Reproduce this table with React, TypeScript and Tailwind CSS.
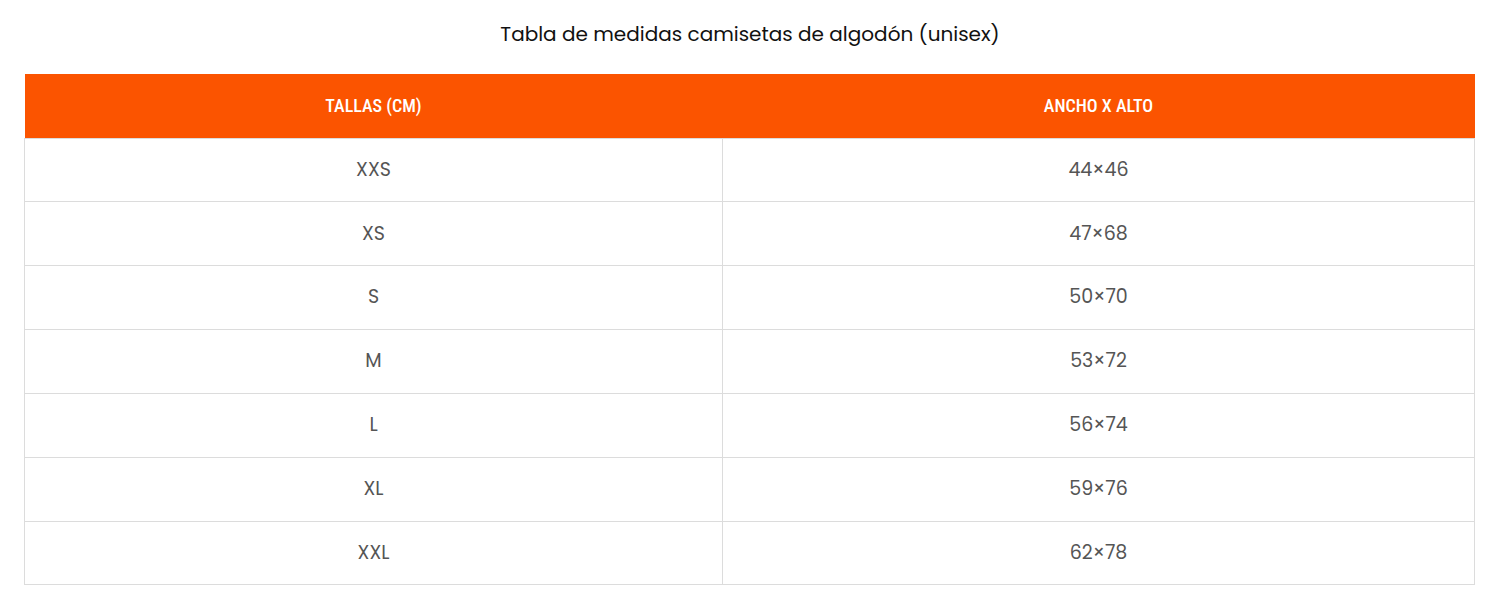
import React from "react";

const rows: [string, string][] = [
  ["XXS", "44×46"],
  ["XS", "47×68"],
  ["S", "50×70"],
  ["M", "53×72"],
  ["L", "56×74"],
  ["XL", "59×76"],
  ["XXL", "62×78"],
];

export default function App() {
  return (
    <div className="w-[1504px] h-[603px] bg-white px-[24px] pt-[19px]">
      <h2 className="text-center text-[20px] leading-[30px] text-[#111] font-['Poppins','Inter','Open_Sans',sans-serif] font-normal pr-[4px]">
        Tabla de medidas camisetas de algodón (unisex)
      </h2>
      <table className="mt-[25px] w-[1451px] border-collapse table-fixed">
        <colgroup>
          <col className="w-[698px]" />
          <col />
        </colgroup>
        <thead>
          <tr className="bg-[#fb5400] h-[64px]">
            <th className="text-white text-[18px] font-medium font-['Liberation_Sans_Narrow','Roboto_Condensed','Roboto',sans-serif] uppercase">
              TALLAS (CM)
            </th>
            <th className="text-white text-[18px] font-medium font-['Liberation_Sans_Narrow','Roboto_Condensed','Roboto',sans-serif] uppercase">
              ANCHO X ALTO
            </th>
          </tr>
        </thead>
        <tbody>
          {rows.map(([a, b]) => (
            <tr key={a} className="h-[63.85px]">
              <td className="border border-[#dcdcdc] text-center text-[19px] text-[#555] font-['Poppins','Inter',sans-serif]">
                {a}
              </td>
              <td className="border border-[#dcdcdc] text-center text-[19px] text-[#555] font-['Poppins','Inter',sans-serif]">
                {b}
              </td>
            </tr>
          ))}
        </tbody>
      </table>
    </div>
  );
}
